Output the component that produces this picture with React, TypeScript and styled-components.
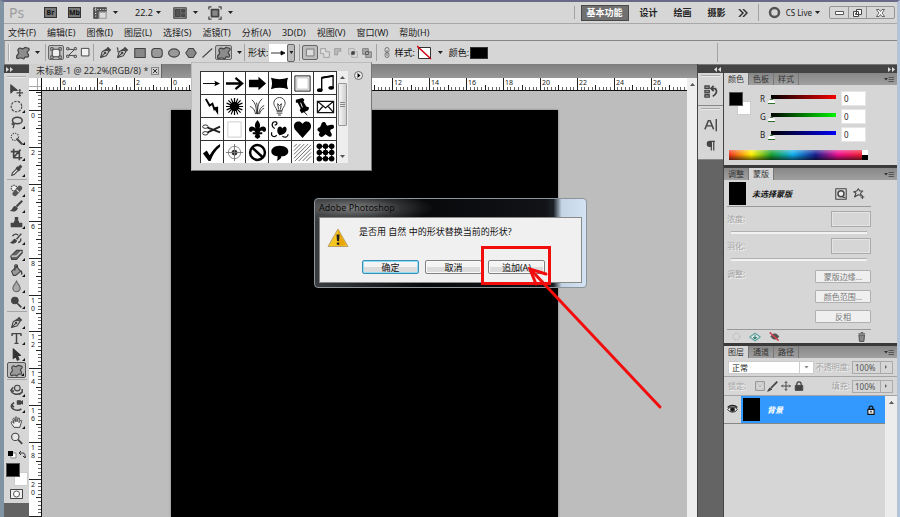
import React from "react";
import styled, { createGlobalStyle, css } from "styled-components";

const Global = createGlobalStyle`
  *, *::before, *::after { box-sizing: border-box; }
  html, body { margin: 0; padding: 0; background: #d6d6d6; }
  body { font-family: "Noto Sans", "Noto Sans CJK SC", sans-serif; font-size: 9px; line-height: 12px; color: #222; }
  button, input, select { font: inherit; color: inherit; margin: 0; padding: 0; border: 0; background: none; border-radius: 0; }
  svg { display: block; flex: none; }
`;

/* ---------- window frame ---------- */

const Frame = styled.div`
  position: relative;
  display: flex;
  flex-direction: column;
  height: 100vh;
  overflow: hidden;
  background: #d6d6d6;
  border-top: 2px solid #6a6a88;
  border-left: 4px solid #8094a4;
  border-right: 3px solid #b3c4d6;
`;
const TitleBar = styled.header`
  display: flex;
  align-items: center;
  flex: none;
  height: 22px;
  padding: 0 2px 0 5px;
  border-bottom: 1px solid #a8a8a8;
`;
const Logo = styled.span`
  width: 35px;
  font-size: 14px;
  line-height: 20px;
  color: #9c9c9c;
`;
const AppBadge = styled.button`
  width: 13px;
  height: 11px;
  margin-right: 11px;
  border: 1px solid #333;
  background: #777;
  color: #111;
  font-size: 7px;
  line-height: 9px;
  font-weight: 700;
`;
const IconButton = styled.button<{ $w?: number }>`
  display: flex;
  align-items: center;
  justify-content: center;
  flex: none;
  width: ${(p) => p.$w ?? 16}px;
  height: 16px;
`;
const LiveButton = styled.button`
  display: flex;
  align-items: center;
  gap: 3px;
  margin-left: 5px;
  font-size: 8px;
  white-space: nowrap;
  i { margin: 0; }
`;
const Caret = styled.i<{ $gap?: number }>`
  flex: none;
  width: 5px;
  height: 3px;
  margin: 0 ${(p) => p.$gap ?? 0}px 0 5px;
  background: #222;
  clip-path: polygon(0 0, 100% 0, 50% 100%);
`;
const ZoomValue = styled.span`
  width: 16px;
`;
const Spacer = styled.div`
  flex: 1;
`;
const VLine = styled.i<{ $m?: string; $h?: number }>`
  flex: none;
  width: 1px;
  height: ${(p) => p.$h ?? 17}px;
  margin: ${(p) => p.$m ?? "0 2px"};
  background: #a2a2a2;
`;
const Workspace = styled.button<{ $on?: boolean }>`
  height: 16px;
  padding: 0 5px;
  margin-right: 6px;
  font-weight: 700;
  line-height: 14px;
  color: #222;
  ${(p) =>
    p.$on &&
    css`
      color: #fff;
      background: #707070;
      border: 1px solid #484848;
    `}
`;
const WinButtons = styled.div`
  display: flex;
  margin-left: 9px;
  border: 1px solid #959595;
  border-radius: 2px;
`;
const WinButton = styled.button<{ $w: number }>`
  display: flex;
  align-items: center;
  justify-content: center;
  width: ${(p) => p.$w}px;
  height: 11px;
  & + & { border-left: 1px solid #959595; }
`;
const MenuBar = styled.nav`
  display: flex;
  flex: none;
  gap: 11px;
  height: 17px;
  padding: 0 4px;
  border-bottom: 1px solid #858585;
  button { line-height: 15px; white-space: nowrap; }
`;

/* ---------- options bar ---------- */

const OptionsBar = styled.div`
  display: flex;
  align-items: center;
  flex: none;
  height: 23px;
  padding: 0 4px 0 3px;
  border-left: 1px solid #999;
`;
const Grip = styled.i`
  flex: none;
  width: 2px;
  height: 17px;
  margin-right: 6px;
  border-left: 1px solid #aaa;
  border-right: 1px solid #eee;
`;
const ToolMode = styled.button<{ $on?: boolean; $w?: number }>`
  display: flex;
  align-items: center;
  justify-content: center;
  flex: none;
  width: ${(p) => p.$w ?? 17}px;
  height: 15px;
  ${(p) =>
    p.$on &&
    css`
      border: 1px solid #666;
      border-radius: 2px;
      background: #bdbdbd;
    `}
`;
const OptLabel = styled.span`
  flex: none;
  margin-right: 1px;
  color: #111;
  white-space: nowrap;
`;
const ShapeWell = styled.span`
  display: flex;
  align-items: center;
  justify-content: center;
  width: 18px;
  height: 18px;
  background: #fff;
`;
const ShapeDrop = styled.button`
  width: 8px;
  height: 18px;
  border: 1px solid #666;
  border-radius: 2px;
  background: #bbb;
  display: flex;
  align-items: center;
  justify-content: center;
  i { margin: 0; width: 4px; }
`;
const ColorWell = styled.button`
  width: 18px;
  height: 12px;
  border: 1px solid #333;
  background: #000;
`;

/* ---------- main area ---------- */

const Main = styled.div`
  display: flex;
  flex: 1;
  min-height: 0;
`;
const Toolbox = styled.aside`
  display: flex;
  flex-direction: column;
  flex: none;
  width: 25px;
  background: #636363;
`;
const DarkStrip = styled.div`
  display: flex;
  align-items: center;
  justify-content: space-between;
  flex: none;
  height: 9px;
  padding: 0 2px;
  background: #444;
  border-top: 1px solid #777;
`;
const ToolList = styled.div`
  display: flex;
  flex-direction: column;
  align-items: center;
  padding: 3px 2px 1px;
  background: #d6d6d6;
`;
const HGrip = styled.i`
  width: 19px;
  height: 2px;
  margin-bottom: 4px;
  border-top: 1px solid #aaa;
  border-bottom: 1px solid #e8e8e8;
`;
const ToolRule = styled.i`
  width: 20px;
  height: 1px;
  margin: 1px 0 2px;
  background: #a5a5a5;
`;
const ToolButton = styled.button<{ $on?: boolean; $more?: boolean }>`
  position: relative;
  display: flex;
  align-items: center;
  justify-content: center;
  width: 19px;
  height: 16px;
  ${(p) =>
    p.$on &&
    css`
      background: #bcbcbc;
      border: 1px solid #555;
      border-radius: 2px;
    `}
  ${(p) =>
    p.$more &&
    css`
      &::after {
        content: "";
        position: absolute;
        right: 1px;
        bottom: 1px;
        width: 3px;
        height: 3px;
        background: #111;
        clip-path: polygon(100% 0, 100% 100%, 0 100%);
      }
    `}
`;
const Document = styled.section`
  display: flex;
  flex-direction: column;
  flex: 1;
  min-width: 0;
`;
const TabStrip = styled.div`
  display: flex;
  flex: none;
  height: 14px;
  background: linear-gradient(#7e7e7e, #989898);
`;
const DocTab = styled.div`
  display: flex;
  align-items: center;
  height: 14px;
  padding: 0 2px 0 7px;
  gap: 3px;
  background: #cfcfcf;
  border-right: 1px solid #666;
  color: #333;
  white-space: nowrap;
`;
const CloseBox = styled.button`
  display: flex;
  align-items: center;
  justify-content: center;
  width: 8px;
  height: 8px;
  border: 1px solid #888;
`;
const RulerRow = styled.div`
  display: flex;
  flex: none;
  height: 13px;
  background: #fff;
  border-bottom: 1px solid #111;
`;
const RulerCorner = styled.div`
  flex: none;
  width: 13px;
  border-right: 1px solid #111;
  background:
    linear-gradient(90deg, transparent 8px, #aaa 8px 9px, transparent 9px),
    linear-gradient(#fff 8px, #aaa 8px 9px, #fff 9px);
`;
const RulerTrack = styled.div`
  flex: 1;
  min-width: 0;
  overflow: hidden;
`;
const SideRuler = styled.div`
  flex: none;
  width: 13px;
  overflow: hidden;
  background: #fff;
  border-right: 1px solid #111;
`;
const RulerText = styled.text`
  font-size: 7px;
  fill: #222;
`;
const CanvasRow = styled.div`
  display: flex;
  flex: 1;
  min-height: 0;
`;
const Pasteboard = styled.div`
  flex: 1;
  display: flex;
  min-width: 0;
  padding: 19px 129px 0;
  background: #bdbdbd;
`;
const Artboard = styled.div`
  flex: 1;
  max-width: 387px;
  background: #000;
  box-shadow: 0 0 2px #777;
`;
const DocScroll = styled.div`
  display: flex;
  flex: none;
  justify-content: center;
  width: 10px;
  padding-top: 5px;
  background: #eee;
`;
const DocRow = styled.div`
  display: flex;
  flex: 1;
  min-height: 0;
`;
const DocColumn = styled.div`
  display: flex;
  flex-direction: column;
  flex: 1;
  min-width: 0;
`;

/* ---------- dock ---------- */

const Dock = styled.aside`
  display: grid;
  grid-template-columns: 25px minmax(0, 1fr);
  grid-template-rows: 9px 1fr;
  flex: none;
  width: 200px;
  background: #646464;
  border-left: 1px solid #444;
`;
const IconDock = styled.div`
  display: flex;
  flex-direction: column;
`;
const IconGroup = styled.div`
  display: flex;
  flex-direction: column;
  align-items: center;
  padding: 2px 0 3px;
  border-bottom: 1px solid #888;
  background: #d6d6d6;
  button { height: 21px; }
`;
const Panels = styled.div`
  display: flex;
  flex-direction: column;
  min-width: 0;
  border-left: 1px solid #444;
`;
const Panel = styled.section<{ $grow?: boolean }>`
  display: flex;
  flex-direction: column;
  flex: ${(p) => (p.$grow ? "1" : "none")};
  background: #d6d6d6;
  border-bottom: ${(p) => (p.$grow ? "0" : "3px solid #3a3a3a")};
`;
const PanelTabs = styled.div`
  display: flex;
  align-items: stretch;
  height: 12px;
  padding-right: 3px;
  background: linear-gradient(#888, #a0a0a0);
`;
const PanelTab = styled.button<{ $on?: boolean }>`
  padding: 0 4px;
  font-size: 8px;
  line-height: 12px;
  color: #333;
  border-right: 1px solid #777;
  background: ${(p) => (p.$on ? "#d6d6d6" : "transparent")};
`;
const PanelMenu = styled.button`
  display: flex;
  align-items: center;
  margin-left: auto;
`;
const ColorBody = styled.div`
  display: grid;
  grid-template-columns: 24px minmax(0, 1fr);
  column-gap: 7px;
  padding: 6px 29px 5px 5px;
`;
const Swatches = styled.div`
  position: relative;
  width: 22px;
  height: 23px;
  margin-top: 1px;
`;
const Swatch = styled.button<{ $c: string; $back?: boolean; $s: number }>`
  position: absolute;
  width: ${(p) => p.$s}px;
  height: ${(p) => p.$s}px;
  ${(p) => (p.$back ? "right: 0; bottom: 0;" : "left: 0; top: 0;")}
  background: ${(p) => p.$c};
  border: 1px solid ${(p) => (p.$back ? "#ccc" : "#555")};
`;
const Channels = styled.div`
  display: flex;
  flex-direction: column;
  gap: 3px;
`;
const Channel = styled.label`
  display: flex;
  align-items: center;
  height: 15px;
  padding-right: 2px;
  font-size: 8px;
`;
const ChannelName = styled.span`
  flex: none;
  width: 8px;
`;
const Slider = styled.input<{ $c: string }>`
  appearance: none;
  flex: 1;
  width: 0;
  min-width: 0;
  height: 11px;
  background: linear-gradient(90deg, #000, ${(p) => p.$c}) 3px 2px / 100% 4px no-repeat;
  &::-webkit-slider-thumb {
    appearance: none;
    width: 7px;
    height: 6px;
    margin-top: 5px;
    background: linear-gradient(#3d6e3d 0 2px, #fff 2px 5px, #2f702f 5px);
    clip-path: polygon(50% 0, 100% 60%, 100% 100%, 0 100%, 0 60%);
  }
`;
const ValueInput = styled.input`
  flex: none;
  width: 25px;
  height: 15px;
  margin-left: 5px;
  padding: 0 2px;
  background: #fff;
  border: 1px solid #e6e6e6;
`;
const Spectrum = styled.div`
  display: grid;
  grid-column: 1 / 3;
  grid-template-columns: 1fr 6px;
  height: 10px;
  margin: 8px 0 0;
`;
const Hues = styled.div`
  background:
    linear-gradient(rgba(255,255,255,.35), rgba(255,255,255,0) 45%, rgba(0,0,0,.6)),
    linear-gradient(90deg, #f03020, #fff000 17%, #18a030 32%, #10b0f0 48%, #182090 65%, #f01090 82%, #f02030);
`;
const Mono = styled.div`
  background: linear-gradient(#fff 50%, #000 50%);
`;

const MaskBody = styled.div`
  padding: 2px 26px 0 3px;
  font-size: 8px;
`;
const MaskHead = styled.div`
  display: flex;
  align-items: center;
  height: 25px;
  padding: 0 2px 1px;
  border-bottom: 1px solid #999;
`;
const Thumb = styled.i<{ $w: number }>`
  flex: none;
  width: ${(p) => p.$w}px;
  height: 23px;
  background: #000;
`;
const MaskTitle = styled.strong`
  flex: 1;
  margin-left: 6px;
  font-style: italic;
  color: #111;
`;
const Faded = styled.label`
  color: #a2a2a2;
  text-shadow: 1px 1px 0 #f4f4f4;
  white-space: nowrap;
`;
const MaskRow = styled.div`
  display: flex;
  align-items: center;
  justify-content: space-between;
  height: 16px;
  margin-top: 4px;
`;
const MaskInput = styled.input`
  width: 40px;
  height: 16px;
  border: 1px solid #aaa;
  box-shadow: inset 0 0 0 1px #e4e4e4;
`;
const MaskSlider = styled.input`
  appearance: none;
  display: block;
  width: 136px;
  height: 3px;
  margin: 4px 0 1px 4px;
  background: #f2f2f2;
  border-top: 1px solid #b0b0b0;
  &::-webkit-slider-thumb { appearance: none; width: 0; height: 0; }
`;
const Refine = styled.div`
  display: flex;
  justify-content: space-between;
  margin-top: 7px;
`;
const RefineButtons = styled.div`
  display: flex;
  flex-direction: column;
  gap: 7px;
  margin-top: 2px;
`;
const RefineButton = styled.button`
  width: 56px;
  height: 13px;
  line-height: 11px;
  background: #efefef;
  border: 1px solid #b0b0b0;
  border-radius: 1px;
  color: #777;
`;
const MaskFoot = styled.div`
  display: flex;
  align-items: center;
  height: 14px;
  margin-top: 6px;
  padding: 0 3px;
  border-top: 1px solid #999;
`;

const LayerOptions = styled.div`
  display: flex;
  align-items: center;
  height: 19px;
  padding: 0 4px;
  font-size: 8px;
  border-bottom: 1px solid #a4a4a4;
`;
const SelectBox = styled.div`
  display: flex;
  align-items: center;
  width: 86px;
  height: 13px;
  background: #fff;
  border: 1px solid #ccc;
  i { margin: 0 4px; background: #888; }
  select {
    appearance: none;
    flex: 1;
    min-width: 0;
    height: 11px;
    padding: 0 3px;
    font-size: 8px;
    line-height: 11px;
    border-right: 1px solid #ccc;
  }
`;
const PercentLabel = styled(Faded)`
  margin-left: auto;
  margin-right: 2px;
`;
const Percent = styled.input`
  width: 29px;
  height: 13px;
  padding: 0 2px;
  border: 1px solid #aaa;
  color: #555;
`;
const Step = styled.button`
  display: flex;
  align-items: center;
  justify-content: center;
  width: 12px;
  height: 13px;
  border: 1px solid #aaa;
  border-left: 0;
`;
const Layers = styled.div`
  display: flex;
  flex: 1;
`;
const LayerList = styled.div`
  flex: 1;
`;
const LayerRow = styled.div`
  display: flex;
  align-items: center;
  height: 28px;
  background: #3399fe;
  border-bottom: 1px solid #888;
  font-size: 8px;
`;
const EyeCell = styled.button`
  display: flex;
  align-items: center;
  justify-content: center;
  align-self: stretch;
  width: 17px;
  margin-right: 2px;
  background: #d6d6d6;
`;
const LayerName = styled.em`
  flex: 1;
  margin-left: 7px;
  font-weight: 700;
  color: #fff;
`;
const LayerScroll = styled.div`
  display: flex;
  justify-content: center;
  width: 12px;
  padding-top: 5px;
  background: #ececec;
`;

/* ---------- shape picker ---------- */

const Picker = styled.div`
  position: absolute;
  left: 187px;
  top: 60px;
  display: flex;
  align-items: flex-start;
  width: 181px;
  padding: 8px 8px 7px;
  border: 1px solid #bbb;
  border-right-color: #777;
  border-bottom-color: #777;
  background: #d6d6d6;
`;
const ShapeGrid = styled.div`
  display: grid;
  grid-template-columns: repeat(6, 1fr);
  grid-auto-rows: 22px;
  gap: 1px;
  width: 137px;
  padding: 1px 1px 0;
  background: #333;
`;
const ShapeCell = styled.button`
  display: flex;
  align-items: center;
  justify-content: center;
  min-width: 0;
  background: #fff;
`;
const PickerScroll = styled.div`
  display: flex;
  flex-direction: column;
  align-items: center;
  align-self: stretch;
  width: 11px;
  padding: 5px 1px;
  background: #eee;
`;
const PickerThumb = styled.i`
  display: flex;
  flex-direction: column;
  align-items: center;
  justify-content: center;
  width: 9px;
  height: 43px;
  margin: 4px 0 auto;
  border: 1px solid #999;
  border-radius: 1px;
  background: linear-gradient(90deg, #f6f6f6, #cfcfcf);
`;
const PickerMenu = styled.button`
  margin-left: 6px;
`;

/* ---------- dialog ---------- */

const Dialog = styled.div`
  position: absolute;
  left: 310px;
  top: 196px;
  width: 273px;
  padding: 0 4px 4px;
  border: 1px solid #8d959c;
  border-radius: 4px;
  background:
    radial-gradient(ellipse 80px 16px at 40px 9px, rgba(150,150,150,.8), rgba(90,90,90,.4) 60%, transparent),
    linear-gradient(90deg, #3a3d40, #08090b 40%, #111316 85%, #1c2228 88%, #c4d4e4 91%, #d4e3f3);
`;
const DialogTitle = styled.div`
  height: 18px;
  line-height: 18px;
  color: #0c0c0c;
`;
const DialogBody = styled.div`
  padding: 10px 7px 8px;
  background: #f0f0f0;
  border: 1px solid #8a8a8a;
`;
const DialogMessage = styled.div`
  display: flex;
  gap: 10px;
  height: 32px;
  color: #111;
  white-space: nowrap;
  p { margin: -2px 0 0; }
`;
const DialogButtons = styled.div`
  display: flex;
  gap: 6px;
  padding-left: 35px;
`;
const DialogButton = styled.button<{ $main?: boolean }>`
  width: 57px;
  height: 14px;
  line-height: 11px;
  color: #111;
  border-radius: 2px;
  border: 1px solid ${(p) => (p.$main ? "#3c8fb4" : "#808080")};
  box-shadow: inset 0 0 0 1px ${(p) => (p.$main ? "#8fdcf5" : "#fafafa")};
  background: linear-gradient(#f4f4f4 50%, #dcdcdc 50%);
`;
const Marker = styled.svg`
  position: absolute;
  left: 476px;
  top: 242px;
  pointer-events: none;
`;

/* ---------- drawings ---------- */

const blob = "M3 3c2-2 3 1 5 0s2-2 4-1 3 0 3 2-3 2-2 4 2 2 1 4-3-1-4 1-1 2-3 1-2-1-4 0-3-1-2-3 2-1 2-3-2-3 0-5z";

const Art = ({ s = 14, children }: { s?: number; children: React.ReactNode }) => (
  <svg width={s} height={s} viewBox="0 0 16 16" fill="none" stroke="#444" strokeWidth="1.4" strokeLinejoin="round">
    {children}
  </svg>
);
const Blob = () => <Art><path d={blob} fill="#8c8c8c" /></Art>;
const Chevrons = ({ left }: { left?: boolean }) => (
  <svg width="7" height="5" viewBox="0 0 7 5" fill="#ddd">
    <path d={left ? "M3 0v5L0 2.500zM7 0v5L4 2.500z" : "M0 0v5l3-2.500zM4 0v5l3-2.500z"} />
  </svg>
);
const Up = ({ down }: { down?: boolean }) => (
  <svg width="5" height="3" viewBox="0 0 5 3" fill="#555"><path d={down ? "M0 0h5L2.500 3z" : "M0 3h5L2.500 0z"} /></svg>
);
const Pen = () => (
  <>
    <path d="M2 14L4 7l5-3 3 3-3 5z" fill="#ddd" />
    <path d="M2 14l5-5" />
    <path d="M10 2l4 4" strokeWidth="3" />
    <circle cx="7.500" cy="8.500" r="1" fill="#333" />
  </>
);

const tools: { name: string; art: React.ReactNode; more?: boolean; on?: boolean; rule?: boolean }[] = [
  { name: "移动", art: <><path d="M1 1v10l3-3 5 0z" fill="#444" /><path d="M12 7v8M8 11h8M10.800 8.200L12 7l1.200 1.200M10.800 13.800L12 15l1.200-1.200" /></> },
  { name: "椭圆选框", more: true, art: <circle cx="8" cy="8" r="6.500" strokeDasharray="3 1.500" /> },
  { name: "套索", more: true, art: <><ellipse cx="9" cy="5.500" rx="6" ry="4" strokeWidth="1.800" /><path d="M4 8c-2 1-2 3 0 3s2-2 0-2M4 11c1 1 1 2-.5 4" /></> },
  { name: "快速选择", more: true, art: <><circle cx="6" cy="6" r="4.500" strokeDasharray="1.500 1.500" /><path d="M8 8l7 7" strokeWidth="2.600" /></> },
  { name: "裁剪", more: true, art: <path d="M4.500 1v11H15M1 4.500h10.500V15M5 11l8-9" strokeWidth="2" /> },
  { name: "吸管", more: true, rule: true, art: <><path d="M2 14l1-3 6-6 2 2-6 6z" fill="#eee" /><path d="M8 4l4 4M10 6l4-4" strokeWidth="3.500" /></> },
  { name: "修复画笔", more: true, art: <><circle cx="5" cy="5" r="3.500" fill="#eee" strokeDasharray="2 1" /><path d="M6 12l6-7" strokeWidth="6" stroke="#555" strokeLinecap="round" /><path d="M8 7l3 3" stroke="#ddd" /></> },
  { name: "画笔", more: true, art: <><path d="M15 1L8 8" strokeWidth="2.500" /><path d="M1 13c3 0 2-4 5-5l3 2c-1 4-5 4-8 3z" fill="#444" /></> },
  { name: "图章", more: true, art: <path d="M6.500 2h3v5h1v2h4v4h-13V9h4V7h1z" fill="#444" /> },
  { name: "历史画笔", more: true, art: <><path d="M14 2L8 9M3 5c2-3 6-3 7-1M13 8c1 3-1 5-3 5" strokeWidth="1.800" /><path d="M1 13c3 0 2-3 5-4l2 2c-1 3-5 3-7 2z" fill="#444" /></> },
  { name: "橡皮擦", more: true, art: <><path d="M1 10l7-7h7v3l-7 8H2z" fill="#666" /><path d="M2 10h6l6-6" stroke="#ddd" /></> },
  { name: "油漆桶", more: true, art: <><path d="M2 9l6-6 5 6-6 5H4z" fill="#999" /><path d="M6 8V2c0-1 3-1 3 0v3M13 8c2 2 2 3 1 5" strokeWidth="1.800" /></> },
  { name: "模糊", more: true, art: <path d="M8 1c1 4 4.500 6 4.500 9a4.500 4.500 0 0 1-9 0C3.500 7 7 5 8 1z" fill="#aaa" stroke="#666" /> },
  { name: "减淡", more: true, rule: true, art: <><circle cx="6" cy="5.500" r="4" fill="#444" /><path d="M9 9l5 5" strokeWidth="2" /></> },
  { name: "钢笔", more: true, art: <Pen /> },
  { name: "文字", more: true, art: <path d="M2.500 5V2h11v3M8 2v12M5.500 14h5" strokeWidth="1.800" /> },
  { name: "路径选择", more: true, art: <path d="M4 1v12l3-3 2 5 2-1-2-5h4z" fill="#333" stroke="#333" /> },
  { name: "自定形状", more: true, on: true, rule: true, art: <path d={blob} fill="#999" /> },
  { name: "3D 旋转", more: true, art: <><circle cx="9" cy="5" r="3.500" fill="#ccc" /><path d="M2 7c-2 5 8 8 13 3M4 4L1 8l4 1M15 6v4l-4 3" strokeWidth="1.800" /></> },
  { name: "3D 相机", more: true, art: <><path d="M2 6c-2 5 7 9 12 5M5 3L2 6l3 3" strokeWidth="1.800" /><path d="M9 1h4v4H9zM13 3l3-2v4z" fill="#444" /></> },
  { name: "抓手", more: true, art: <path d="M5 14C4 12 1 9 1.500 7.500S4 8 5 9L3.500 4c0-1.500 1.500-1.500 2 0L6.500 7V2c0-1.500 1.800-1.500 2 0V7l1.500-4c.5-1.300 2-1 1.500.5L11 8l2-2.500c1-1 2 0 1.300 1L12 14z" fill="#eee" strokeWidth="1.200" /> },
  { name: "缩放", art: <><circle cx="6.500" cy="6" r="4.500" fill="#e8e8e8" /><path d="M10 9.500l5 5" strokeWidth="2.200" /></> },
];

const shapes: { name: string; art: React.ReactNode }[] = [
  { name: "箭头 1", art: <><path d="M1 10h14" stroke="#000" /><path d="M13 7l6 3-6 3 1-3z" fill="#000" /></> },
  { name: "箭头 2", art: <path d="M1 10h16M11 4l7 6-7 6" stroke="#000" strokeWidth="2.400" /> },
  { name: "箭头 3", art: <path d="M1 6h10V3l8 7-8 7v-3H1z" fill="#000" /> },
  { name: "横幅", art: <path d="M1 4c6 2 12 2 18 0-1.500 4-1.500 8 0 12-6-2-12-2-18 0 1.500-4 1.500-8 0-12z" fill="#000" /> },
  { name: "边框", art: <><path d="M2 2h16v16H2z" stroke="#111" /><path d="M4 4h12v12H4z" stroke="#bbb" /></> },
  { name: "音符", art: <><path d="M6 17V4l12-2v12" stroke="#000" strokeWidth="1.400" /><path d="M6 4l12-2" stroke="#000" strokeWidth="2" /><ellipse cx="4" cy="17" rx="3" ry="2" fill="#000" /><ellipse cx="16" cy="14.500" rx="3" ry="2" fill="#000" /></> },
  { name: "闪电", art: <><path d="M4 2l4 7 3-2 2 6 2-1" stroke="#000" strokeWidth="2" /><path d="M12 11l5-1 0 9z" fill="#000" /></> },
  { name: "爆炸", art: <><circle cx="10" cy="10" r="5" fill="#000" /><path d="M10 1v18M1 10h18M3.600 3.600l12.800 12.800M16.400 3.600L3.600 16.400M6.500 1.700l7 16.600M13.500 1.700l-7 16.600M1.700 6.500l16.600 7M1.700 13.500l16.600-7" stroke="#000" strokeWidth="1.300" /></> },
  { name: "草", art: <path d="M9 18C9 12 8 6 4 3M10 18c0-8 1-13 5-16M8 18c-1-5-3-7-6-8M11 18c1-5 3-8 6-9M10 18c0-5 0-8-1-12M12 18c1-3 3-6 5-6" stroke="#333" /> },
  { name: "灯泡", art: <><path d="M7 14c0-3-3-4-3-7.500a6 6 0 0 1 12 0c0 3.500-3 4.500-3 7.500z" stroke="#444" /><path d="M7 15h6M7 17h6M8.500 19h3M8 7l1 6M12 7l-1 6M8 7l2 2 2-2" stroke="#333" /></> },
  { name: "图钉", art: <><path d="M3 3l7-2 2 2-1 2 3 5 3 1-1 3-7 3-2-3 1-2-3-6-2 0z" fill="#000" /><path d="M11 15l4 4M8 6l2 5" stroke="#000" /><path d="M8 6l2 5" stroke="#fff" /></> },
  { name: "信封", art: <path d="M1.500 4.500h17v12h-17zM1.500 4.500l8.500 7 8.500-7M1.500 16.500l6-7M18.500 16.500l-6-7" stroke="#111" strokeWidth="1.300" /> },
  { name: "剪刀", art: <><path d="M6 8l13 5M6 13l13-6" stroke="#222" strokeWidth="2" /><ellipse cx="3.500" cy="7" rx="2.800" ry="1.800" stroke="#222" /><ellipse cx="3.500" cy="14" rx="2.800" ry="1.800" stroke="#222" /></> },
  { name: "方框", art: <path d="M3 2h14v16H3z" stroke="#ccc" /> },
  { name: "百合花", art: <path d="M10 0c4 5 3 7 1 11 1-5 8-6 8-1 0 3-3 3-4 1-2 0-2 1-3 2h3v2h-3l1 3-3 2-3-2 1-3H5v-2h3c-1-1-1-2-3-2-1 2-4 2-4-1 0-5 7-4 8 1C7 7 6 5 10 0z" fill="#000" /> },
  { name: "花饰", art: <><path d="M8 9c1-3 4-3 5 0 2-4 6-1 4 3-2 3-4 3-7 4-2-2-3-4-2-7z" fill="#000" /><path d="M5 9C0 6 3 1 6 2s0 4-1 3M2 13c-2 4 3 6 5 3M13 17c3 2 6 1 6-2" stroke="#000" strokeWidth="1.300" /></> },
  { name: "心形", art: <path d="M10 19L2 10C-1 5 3 0 8 2l2 2 2-2c5-2 9 3 6 8z" fill="#000" /> },
  { name: "污渍", art: <path d="M3 8c3-1 2-6 5-6s2 3 4 4c3-1 7-2 7 1s-4 2-4 4c0 2 3 4 1 6s-4-1-6-2c-2 2-4 4-6 2s0-3 0-4c-2-1-4-3-1-5z" fill="#000" /> },
  { name: "复选", art: <path d="M1 11l4-3 3 5C11 8 14 4 19 1v3c-5 4-8 9-10 15H7z" fill="#000" /> },
  { name: "靶心", art: <><circle cx="10" cy="10" r="6.500" stroke="#888" /><circle cx="10" cy="10" r="3" fill="#333" /><path d="M10 1v18M1 10h18" stroke="#777" /></> },
  { name: "禁止", art: <><circle cx="10" cy="10" r="7.800" stroke="#000" strokeWidth="2.600" /><path d="M4 4.500l12 11" stroke="#000" strokeWidth="2.600" /></> },
  { name: "对话", art: <path d="M10 3c12 0 12 11 2 11 0 2-2 4-5 5 1-2 1-3 1-5C-2 13 0 3 10 3z" fill="#000" /> },
  { name: "斜线", art: <path d="M1 4l3-3M1 8l7-7M1 12L12 1M1 16L16 1M2 19L19 2M6 19L19 6M10 19l9-9M14 19l5-5" stroke="#666" /> },
  {
    name: "圆点",
    art: [3.5, 10, 16.5].flatMap((x) => [3.5, 10, 16.5].map((y) => <circle key={`${x}-${y}`} cx={x} cy={y} r="2.900" fill="#000" />)).concat(
      <path key="grid" d="M3.500 3.500h13v13h-13zM10 3v14M3 10h14" stroke="#000" />
    ),
  },
];

const UNIT = 18.45;
const range = (from: number, to: number) => Array.from({ length: to - from + 1 }, (_, i) => from + i);
const tickLen = (i: number) => (i % 10 === 0 ? 13 : i % 5 === 0 ? 5 : 3);
const tickColor = (i: number) => (i % 5 === 0 ? "#222" : "#666");

const TopRuler = () => (
  <svg width="100%" height="12">
    {range(-34, 400).map((i) => {
      const x = Math.round(129 + (i * UNIT) / 5) + 0.5;
      return <path key={i} d={`M${x} 12V${12 - tickLen(i)}`} stroke={tickColor(i)} />;
    })}
    {range(-3, 13).map((n) => (
      <RulerText key={n} x={Math.round(131 + n * 2 * UNIT)} y="7">{Math.abs(n * 2)}</RulerText>
    ))}
  </svg>
);
const LeftRuler = () => (
  <svg width="12" height="100%">
    {range(-5, 300).map((i) => {
      const y = Math.round(19 + (i * UNIT) / 5) + 0.5;
      return <path key={i} d={`M12 ${y}H${12 - tickLen(i)}`} stroke={tickColor(i)} />;
    })}
    {range(0, 10).map((n) =>
      String(n * 2).split("").map((d, k) => (
        <RulerText key={`${n}-${k}`} x="2" y={Math.round(27 + n * 2 * UNIT) + k * 8}>{d}</RulerText>
      ))
    )}
  </svg>
);

const MenuGlyph = () => (
  <svg width="10" height="7" viewBox="0 0 10 7"><path d="M0 2h4L2 4.500z" fill="#333" /><path d="M4.500 1.500H10M4.500 3.500H10M4.500 5.500H10" stroke="#555" /></svg>
);
const PanelHeader = ({ tabs, active }: { tabs: string[]; active: number }) => (
  <PanelTabs>
    {tabs.map((t, i) => <PanelTab key={t} $on={i === active}>{t}</PanelTab>)}
    <PanelMenu aria-label="面板菜单"><MenuGlyph /></PanelMenu>
  </PanelTabs>
);
const PercentField = ({ id, label }: { id: string; label: string }) => (
  <>
    <PercentLabel htmlFor={id}>{label}</PercentLabel>
    <Percent id={id} defaultValue="100%" />
    <Step aria-label={label}><svg width="3" height="4"><path d="M0 0v4l2-2z" fill="#666" /></svg></Step>
  </>
);

const menus = ["文件(F)", "编辑(E)", "图像(I)", "图层(L)", "选择(S)", "滤镜(T)", "分析(A)", "3D(D)", "视图(V)", "窗口(W)", "帮助(H)"];
const workspaces = ["基本功能", "设计", "绘画", "摄影"];

export default function App() {
  return (
    <>
      <Global />
      <Frame>
        <TitleBar>
          <Logo>Ps</Logo>
          <AppBadge>Br</AppBadge>
          <AppBadge>Mb</AppBadge>
          <IconButton aria-label="查看额外内容">
            <Art><path d="M1 2h14v4H6v8H1z" fill="#555" /><path d="M7 7h8v7H7z" fill="#ddd" stroke="#999" /><path d="M3 2v12M2 4h13" stroke="#eee" strokeDasharray="1 2" /></Art>
          </IconButton>
          <Caret $gap={17} />
          <ZoomValue>22.2</ZoomValue>
          <Caret $gap={11} />
          <IconButton aria-label="排列文档">
            <Art><path d="M1 2h14v12H1z" fill="#999" /><path d="M3 4h5v8H3zM10 4h3v3h-3zM10 9h3v3h-3z" fill="#555" /></Art>
          </IconButton>
          <Caret $gap={9} />
          <IconButton aria-label="屏幕模式">
            <Art><path d="M4 4h8v8H4z" fill="#888" strokeWidth="2" /><path d="M1 4V1h3M12 1h3v3M15 12v3h-3M4 15H1v-3" /></Art>
          </IconButton>
          <Caret />
          <Spacer />
          <VLine $m="0 6px 0 0" $h={13} />
          {workspaces.map((w, i) => <Workspace key={w} $on={i === 0}>{w}</Workspace>)}
          <IconButton aria-label="更多工作区" $w={12}>
            <svg width="10" height="8" viewBox="0 0 10 8" fill="none" stroke="#333" strokeWidth="1.500"><path d="M1 0l4 4-4 4M5 0l4 4-4 4" /></svg>
          </IconButton>
          <VLine $m="0 9px" />
          <svg width="13" height="13"><circle cx="6.500" cy="6.500" r="4.500" fill="none" stroke="#555" strokeWidth="2.500" /></svg>
          <LiveButton>CS Live<Caret /></LiveButton>
          <WinButtons>
            <WinButton $w={18} aria-label="最小化"><svg width="9" height="4"><path d="M.5.5h8v3h-8z" fill="#fff" stroke="#555" /></svg></WinButton>
            <WinButton $w={18} aria-label="还原"><svg width="9" height="8" fill="#fff" stroke="#444"><path d="M3.500.5h5v5h-5zM.5 2.500h5v5h-5zM2.500 4.500h1v1h-1z" /></svg></WinButton>
            <WinButton $w={28} aria-label="关闭"><svg width="9" height="8" fill="#fff" stroke="#444" strokeWidth=".8"><path d="M.5.5h2.500l1.500 2 1.500-2h2.500L6 4l2.500 3.500H6l-1.500-2-1.500 2H.5L3 4z" /></svg></WinButton>
          </WinButtons>
        </TitleBar>

        <MenuBar>{menus.map((m) => <button key={m}>{m}</button>)}</MenuBar>

        <OptionsBar>
          <Grip />
          <Blob />
          <Caret $gap={3} />
          <VLine />
          <ToolMode $on $w={16} aria-label="形状图层"><Art s={12}><path d="M3 3h10v10H3z" fill="#eee" /><path d="M1 1h3v3H1zM12 1h3v3h-3zM1 12h3v3H1zM12 12h3v3h-3z" fill="#fff" /></Art></ToolMode>
          <ToolMode $w={14} aria-label="路径"><Art s={11}><path d="M3 3l9 1-8 8 10 1" /><path d="M1 1h3v3H1zM12 1h3v3h-3zM1 12h3v3H1zM12 12h3v3h-3z" fill="#fff" /></Art></ToolMode>
          <ToolMode $w={14} aria-label="填充像素"><Art s={11}><path d="M2 2h11v11H2z" fill="#f2f2f2" /></Art></ToolMode>
          <VLine $m="0 3px 0 1px" />
          <ToolMode aria-label="钢笔"><Art s={13}><Pen /></Art></ToolMode>
          <ToolMode aria-label="自由钢笔"><Art s={13}><Pen /><path d="M1 2c3 1 0 4 2 6" /></Art></ToolMode>
          <ToolMode aria-label="矩形"><Art s={12}><path d="M1 2h14v12H1z" fill="#888" /></Art></ToolMode>
          <ToolMode aria-label="圆角矩形"><Art s={12}><rect x="1" y="2" width="14" height="12" rx="4" fill="#999" /></Art></ToolMode>
          <ToolMode aria-label="椭圆"><Art s={12}><ellipse cx="8" cy="8" rx="7.300" ry="5.500" fill="#999" /></Art></ToolMode>
          <ToolMode aria-label="多边形"><Art s={12}><path d="M5 2h6l4 6-4 6H5L1 8z" fill="#888" /></Art></ToolMode>
          <ToolMode $w={16} aria-label="直线"><Art s={12}><path d="M2 14L15 2" /></Art></ToolMode>
          <ToolMode $on aria-label="自定形状"><Blob /></ToolMode>
          <Caret />
          <VLine $m="0 3px 0 2px" />
          <OptLabel>形状:</OptLabel>
          <ShapeWell><svg width="14" height="6"><path d="M0 3h10V1l4 2-4 2V3" stroke="#000" strokeWidth=".8" /></svg></ShapeWell>
          <ShapeDrop aria-label="选择形状"><Caret /></ShapeDrop>
          <VLine $m="0 2px 0 4px" />
          <ToolMode $on $w={16} aria-label="新建"><Art s={11}><path d="M2 3h11v10H2z" fill="#ddd" stroke="#777" /></Art></ToolMode>
          <ToolMode $w={14} aria-label="相加"><Art s={10}><path d="M1 1h8v5h6v9H6V9H1z" fill="#ddd" stroke="#999" /></Art></ToolMode>
          <ToolMode $w={14} aria-label="相减"><Art s={10}><path d="M1 1h10v4H6v6H1z" fill="#bbb" stroke="#999" /></Art></ToolMode>
          <ToolMode $w={14} aria-label="交叉"><Art s={10}><path d="M1 1h9v9H1zM6 6h9v9H6z" stroke="#aaa" /><path d="M6 6h4v4H6z" fill="#444" /></Art></ToolMode>
          <ToolMode $w={14} aria-label="重叠除外"><Art s={10}><path d="M1 1h9v9H1zM6 6h9v9H6z" fill="#aaa" stroke="#777" /><path d="M6 6h4v4H6z" fill="#eee" /></Art></ToolMode>
          <VLine $m="0 3px 0 2px" />
          <IconButton $w={14} aria-label="链接样式"><svg width="6" height="12" fill="none" stroke="#777"><rect x="1" y=".5" width="4" height="5" rx="2" /><rect x="1" y="5.500" width="4" height="5" rx="2" /><path d="M3 3v6" /></svg></IconButton>
          <OptLabel>样式:</OptLabel>
          <IconButton $w={17} aria-label="无样式"><svg width="15" height="15"><path d="M1.500 2.500h12v11h-12z" fill="#fff" stroke="#333" /><path d="M0 1l14 13" stroke="#d00010" strokeWidth="1.500" /></svg></IconButton>
          <Caret $gap={6} />
          <OptLabel>颜色:</OptLabel>
          <ColorWell aria-label="颜色" />
          <Spacer />
          <VLine $m="0 175px 0 0" $h={19} />
        </OptionsBar>

        <Main>
          <Toolbox>
            <DarkStrip><Chevrons /></DarkStrip>
            <ToolList>
              <HGrip />
              {tools.map((t) => (
                <React.Fragment key={t.name}>
                  <ToolButton aria-label={t.name} $on={t.on} $more={t.more}><Art s={13}>{t.art}</Art></ToolButton>
                  {t.rule && <ToolRule />}
                </React.Fragment>
              ))}
              <ToolButton aria-label="默认颜色"><svg width="19" height="9"><path d="M4 3h5v5H4z" fill="#fff" stroke="#888" /><path d="M1 1h5v5H1z" fill="#000" /><path d="M13 3h3c2 0 2 2 2 4M14 1l-2 2 2 2M16 6l2 2 1-2" fill="none" stroke="#333" /></svg></ToolButton>
              <Swatches>
                <Swatch $c="#fff" $s={14} $back aria-label="背景色" />
                <Swatch $c="#000" $s={14} aria-label="前景色" />
              </Swatches>
              <ToolButton aria-label="快速蒙版"><svg width="13" height="10"><path d="M.5.5h12v9H.5z" fill="#eee" stroke="#444" /><circle cx="6.500" cy="5" r="3" fill="#fff" stroke="#555" /></svg></ToolButton>
            </ToolList>
          </Toolbox>

          <Document>
            <TabStrip>
              <DocTab>
                未标题-1 @ 22.2%(RGB/8) *
                <CloseBox aria-label="关闭文档"><svg width="4" height="4"><path d="M0 0l4 4M4 0L0 4" stroke="#333" /></svg></CloseBox>
              </DocTab>
            </TabStrip>
            <DocRow>
              <DocColumn>
                <RulerRow>
                  <RulerCorner />
                  <RulerTrack><TopRuler /></RulerTrack>
                </RulerRow>
                <CanvasRow>
                  <SideRuler><LeftRuler /></SideRuler>
                  <Pasteboard><Artboard /></Pasteboard>
                </CanvasRow>
              </DocColumn>
              <DocScroll><Up /></DocScroll>
            </DocRow>
          </Document>

          <Dock>
            <DarkStrip><span /><Chevrons left /></DarkStrip>
            <DarkStrip><span /><Chevrons /></DarkStrip>
            <IconDock>
              <IconGroup>
                <HGrip />
                <IconButton aria-label="历史记录"><Art><path d="M1 1h5v3H1zM1 6h5v3H1zM1 11h5v3H1z" fill="#888" /><path d="M9 4h4c3 4 0 7-3 9M11 1L8 4l3 3" strokeWidth="2" /></Art></IconButton>
              </IconGroup>
              <IconGroup>
                <HGrip />
                <IconButton aria-label="字符"><Art><path d="M1 13L5 3h2l4 10M3 9h6M14 1v14" strokeWidth="1.600" /></Art></IconButton>
                <IconButton aria-label="段落"><Art s={13}><path d="M9 3v11M12 3v11" strokeWidth="1.500" /><path d="M13 3H7c-4 0-4 6 0 6h2V3z" fill="#444" /></Art></IconButton>
              </IconGroup>
            </IconDock>
            <Panels>
              <Panel>
                <PanelHeader tabs={["颜色", "色板", "样式"]} active={0} />
                <ColorBody>
                  <Swatches>
                    <Swatch $c="#fff" $s={14} $back aria-label="背景色" />
                    <Swatch $c="#000" $s={14} aria-label="前景色" />
                  </Swatches>
                  <Channels>
                    {[["R", "#f00"], ["G", "#0f0"], ["B", "#00f"]].map(([n, c]) => (
                      <Channel key={n}>
                        <ChannelName>{n}</ChannelName>
                        <Slider type="range" min="0" max="255" defaultValue="0" $c={c} aria-label={n} />
                        <ValueInput defaultValue="0" aria-label={`${n} 值`} />
                      </Channel>
                    ))}
                  </Channels>
                  <Spectrum><Hues /><Mono /></Spectrum>
                </ColorBody>
              </Panel>

              <Panel>
                <PanelHeader tabs={["调整", "蒙版"]} active={1} />
                <MaskBody>
                  <MaskHead>
                    <Thumb $w={17} />
                    <MaskTitle>未选择蒙版</MaskTitle>
                    <IconButton aria-label="像素蒙版"><Art s={12}><path d="M1 1h14v14H1z" /><circle cx="8" cy="7.500" r="4" fill="#eee" strokeWidth="2" /><path d="M10 12l4 1" /></Art></IconButton>
                    <IconButton $w={20} aria-label="矢量蒙版"><Art s={12}><path d="M2 12l2-5-3-2 4-1 2-3 2 3 4 0-3 3 1 3-4-1zM10 12h5M12.500 9.500v5" /></Art></IconButton>
                  </MaskHead>
                  <MaskRow><Faded htmlFor="density">浓度:</Faded><MaskInput id="density" disabled /></MaskRow>
                  <MaskSlider type="range" disabled aria-label="浓度" />
                  <MaskRow><Faded htmlFor="feather">羽化:</Faded><MaskInput id="feather" disabled /></MaskRow>
                  <MaskSlider type="range" disabled aria-label="羽化" />
                  <Refine>
                    <Faded as="span">调整:</Faded>
                    <RefineButtons>
                      <RefineButton>蒙版边缘...</RefineButton>
                      <RefineButton>颜色范围...</RefineButton>
                      <RefineButton>反相</RefineButton>
                    </RefineButtons>
                  </Refine>
                  <MaskFoot>
                    <IconButton $w={13} aria-label="载入选区"><Art s={9}><circle cx="8" cy="8" r="6" stroke="#aaa" strokeDasharray="3 2" /></Art></IconButton>
                    <IconButton $w={24} aria-label="应用蒙版"><Art s={12}><path d="M1 8l7-5 7 5-7 5z" fill="#eee" stroke="#5aa39c" /><path d="M8 5v5M5.500 8L8 10.500 10.500 8" stroke="#287868" /></Art></IconButton>
                    <IconButton $w={14} aria-label="停用蒙版"><Art s={11}><path d="M3 8c3-5 8-5 11 0-3 5-8 5-11 0z" fill="#555" /><path d="M1 2l13 12" stroke="#d04050" strokeWidth="2" /></Art></IconButton>
                    <Spacer />
                    <IconButton $w={12} aria-label="删除蒙版"><Art s={10}><path d="M3 5h9l-1 10H4zM2 3h11M6 1h4" fill="#888" /></Art></IconButton>
                  </MaskFoot>
                </MaskBody>
              </Panel>

              <Panel $grow>
                <PanelHeader tabs={["图层", "通道", "路径"]} active={0} />
                <LayerOptions>
                  <SelectBox><select aria-label="混合模式"><option>正常</option></select><Caret /></SelectBox>
                  <PercentField id="opacity" label="不透明度:" />
                </LayerOptions>
                <LayerOptions>
                  <Faded as="span">锁定:</Faded>
                  <VLine $m="0 3px" $h={0} />
                  <IconButton $w={13} aria-label="锁定透明像素"><Art s={10}><path d="M1 1h14v14H1z" stroke="#888" /><path d="M4 4l8 8M12 4l-8 8" stroke="#aaa" strokeDasharray="3 2" /></Art></IconButton>
                  <IconButton $w={13} aria-label="锁定图像像素"><Art s={11}><path d="M15 1L6 10" strokeWidth="2.500" /><path d="M1 15l3-5 3 2z" fill="#444" /></Art></IconButton>
                  <IconButton $w={13} aria-label="锁定位置"><Art s={10}><path d="M8 1v14M1 8h14M6 3l2-2 2 2M6 13l2 2 2-2M3 6L1 8l2 2M13 6l2 2-2 2" strokeWidth="1.500" /></Art></IconButton>
                  <IconButton $w={13} aria-label="锁定全部"><Art s={10}><path d="M2 7h12v8H2z" fill="#444" /><path d="M4.500 7V5c0-5 7-5 7 0v2" strokeWidth="2" /></Art></IconButton>
                  <PercentField id="fill" label="填充:" />
                </LayerOptions>
                <Layers>
                  <LayerList>
                    <LayerRow>
                      <EyeCell aria-label="显示图层"><Art s={11}><path d="M1 8c3-5 11-5 14 0-3 5-11 5-14 0z" fill="#eee" stroke="#222" /><circle cx="8" cy="8" r="3" fill="#111" /><path d="M1 5c4-4 10-4 14 0" stroke="#222" strokeWidth="2" /></Art></EyeCell>
                      <Thumb $w={17} />
                      <LayerName>背景</LayerName>
                      <IconButton $w={29} aria-label="已锁定"><Art s={10}><path d="M3 7h10v8H3z" fill="#eee" stroke="#111" strokeWidth="1.800" /><path d="M5 7V4c0-3 6-3 6 0v3M8 9v3" stroke="#111" strokeWidth="2" /></Art></IconButton>
                    </LayerRow>
                  </LayerList>
                  <LayerScroll><Up /></LayerScroll>
                </Layers>
              </Panel>
            </Panels>
          </Dock>
        </Main>

        <Picker>
          <ShapeGrid>
            {shapes.map((s) => (
              <ShapeCell key={s.name} aria-label={s.name}>
                <svg width="19" height="19" viewBox="0 0 20 20" fill="none">{s.art}</svg>
              </ShapeCell>
            ))}
          </ShapeGrid>
          <PickerScroll>
            <Up />
            <PickerThumb><svg width="5" height="6"><path d="M0 .5h5M0 2.500h5M0 4.500h5" stroke="#888" /></svg></PickerThumb>
            <Up down />
          </PickerScroll>
          <PickerMenu aria-label="形状菜单">
            <svg width="9" height="9"><circle cx="4.500" cy="4.500" r="4" fill="#eee" stroke="#666" /><path d="M3.500 2v5l3-2.500z" fill="#000" /></svg>
          </PickerMenu>
        </Picker>

        <Dialog role="dialog" aria-label="Adobe Photoshop">
          <DialogTitle>Adobe Photoshop</DialogTitle>
          <DialogBody>
            <DialogMessage>
              <svg width="22" height="20" viewBox="0 0 22 20">
                <path d="M11 1L21 18.500H1z" fill="#f7c520" stroke="#b9a16a" strokeLinejoin="round" />
                <path d="M11 2l8 15-8 1z" fill="#e8a808" />
                <path d="M9.500 6.500h3L12 13h-2zM9.800 14.500h2.400v2.200H9.800z" fill="#222" />
              </svg>
              <p>是否用 自然 中的形状替换当前的形状?</p>
            </DialogMessage>
            <DialogButtons>
              <DialogButton $main>确定</DialogButton>
              <DialogButton>取消</DialogButton>
              <DialogButton>追加(A)</DialogButton>
            </DialogButtons>
          </DialogBody>
        </Dialog>

        <Marker width="186" height="170" viewBox="0 0 186 170" fill="none" stroke="#f20d0d">
          <path d="M2.500 3.500h67v36h-67z" strokeWidth="3" />
          <path d="M180 163L52 27" strokeWidth="3" strokeLinecap="round" />
          <path d="M56 40L50 25L66 30" strokeWidth="3" strokeLinecap="round" />
        </Marker>
      </Frame>
    </>
  );
}
